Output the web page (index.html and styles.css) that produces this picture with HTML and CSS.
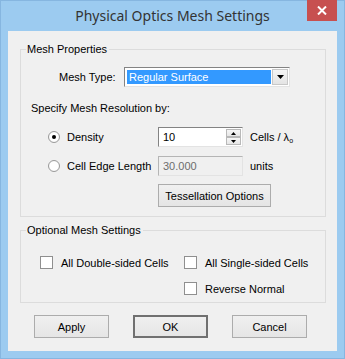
FILE: index.html
```html
<!DOCTYPE html>
<html lang="en">
<head>
  <meta charset="UTF-8">
  <title>Physical Optics Mesh Settings</title>
  <link rel="stylesheet" href="styles.css">
</head>
<body>
  <div class="window">
    <!-- Title bar -->
    <div class="titlebar">
      <span></span>
      <div class="title">Physical Optics Mesh Settings</div>
      <div class="close">
        <svg width="10" height="9" viewBox="0 0 10 9"><path d="M1 0.5 L9 8.5 M9 0.5 L1 8.5" stroke="#fff" stroke-width="2"/></svg>
      </div>
    </div>

    <div class="client">
      <!-- Mesh Properties -->
      <fieldset class="group group-mesh">
        <legend>Mesh Properties</legend>
        <div class="type-row">
          <span class="type-label">Mesh Type:</span>
          <div class="combo">
            <span class="combo-value">Regular Surface</span>
            <span class="combo-arrow">
              <svg width="7" height="4" viewBox="0 0 7 4"><path d="M0 0 H7 L3.5 4 Z" fill="#000"/></svg>
            </span>
          </div>
        </div>
        <div class="hint">Specify Mesh Resolution by:</div>

        <div class="option-row first">
          <span class="radio checked"></span>
          <span class="option-label">Density</span>
          <div class="field">
            <span class="field-value">10</span>
            <span class="spin">
              <span class="spin-btn"><svg width="5" height="3" viewBox="0 0 5 3"><path d="M2.5 0 L5 3 H0 Z" fill="#000"/></svg></span>
              <span class="spin-btn"><svg width="5" height="3" viewBox="0 0 5 3"><path d="M0 0 H5 L2.5 3 Z" fill="#000"/></svg></span>
            </span>
          </div>
          <span class="unit">Cells / λ<sub>o</sub></span>
        </div>

        <div class="option-row second">
          <span class="radio"></span>
          <span class="option-label">Cell Edge Length</span>
          <div class="field disabled">
            <span class="field-value">30.000</span>
          </div>
          <span class="unit">units</span>
        </div>

        <div class="tess-row">
          <button class="btn tess">Tessellation Options</button>
        </div>
      </fieldset>

      <!-- Optional Mesh Settings -->
      <fieldset class="group group-optional">
        <legend>Optional Mesh Settings</legend>
        <div class="checks">
          <label class="check"><span class="box"></span>All Double-sided Cells</label>
          <label class="check"><span class="box"></span>All Single-sided Cells</label>
          <span></span>
          <label class="check"><span class="box"></span>Reverse Normal</label>
        </div>
      </fieldset>

      <div class="actions">
        <button class="btn">Apply</button>
        <button class="btn default">OK</button>
        <button class="btn">Cancel</button>
      </div>
    </div>
  </div>
</body>
</html>
```

FILE: styles.css
```css
/* Window frame */
body {
  margin: 0;
  background: #9ccbf0;
}

.window {
  width: 345px;
  height: 359px;
  box-sizing: border-box;
  border: 1px solid #86b6e0;
  background: #9ccbf0;
  display: flex;
  flex-direction: column;
  font-family: "Liberation Sans", Arial, sans-serif;
  font-size: 11px;
  color: #000;
}

.titlebar {
  height: 30px;
  display: grid;
  grid-template-columns: 1fr auto 1fr;
  align-items: start;
}

.title {
  font-family: "Noto Sans", sans-serif;
  font-size: 14px;
  line-height: 30px;
  color: #333;
}

.close {
  justify-self: end;
  margin-top: -1px;
  margin-right: 7px;
  width: 30px;
  height: 21px;
  background: #c75050;
  display: flex;
  align-items: center;
  justify-content: center;
}

.client {
  margin: 0 7px 7px;
  height: 320px;
  background: #f0f0f0;
  padding: 0 11px 0 12px;
}

/* Group boxes */
.group {
  margin: 0;
  padding: 0;
  width: 306px;
  box-sizing: border-box;
  border: 1px solid #dcdcdc;
  min-inline-size: 0;
}

.group legend {
  margin-left: 5px;
  padding: 0 2px 0 1px;
  line-height: 14px;
}

.group-mesh {
  margin-top: 11px;
  padding-bottom: 9px;
}

.group-optional {
  margin-top: 6px;
  padding-bottom: 7px;
}

/* Mesh type */
.type-row {
  display: flex;
  align-items: center;
  margin-top: 11px;
  padding-left: 38px;
}

.type-label {
  width: 65px;
}

.combo {
  width: 166px;
  height: 20px;
  box-sizing: border-box;
  border: 1px solid;
  border-color: #838383 #e3e3e3 #e3e3e3 #838383;
  background: #fff;
  padding: 1px;
  display: flex;
}

.combo-value {
  flex: 1;
  background: #3399ff;
  color: #fff;
  padding-left: 2px;
  line-height: 14px;
  margin: 1px;
}

.combo-arrow {
  width: 16px;
  box-sizing: border-box;
  border: 1px solid #c8c8c8;
  background: linear-gradient(#f5f5f5, #e4e4e4);
  display: flex;
  align-items: center;
  justify-content: center;
}

.hint {
  margin-top: 14px;
  padding-left: 10px;
  line-height: 14px;
}

/* Radio option rows */
.option-row {
  display: grid;
  grid-template-columns: 12px 98px 85px auto;
  align-items: center;
  padding-left: 27px;
  height: 20px;
}

.option-row.first {
  margin-top: 12px;
}

.option-row.second {
  margin-top: 9px;
}

.option-label {
  padding-left: 7px;
}

.radio {
  width: 12px;
  height: 12px;
  box-sizing: border-box;
  border-radius: 50%;
  border: 1px solid #9a9a9a;
  background: radial-gradient(circle, #fff 55%, #e6e6e6);
  display: flex;
  align-items: center;
  justify-content: center;
}

.radio.checked::after {
  content: "";
  width: 4px;
  height: 4px;
  border-radius: 50%;
  background: #000;
}

.field {
  height: 20px;
  box-sizing: border-box;
  border: 1px solid;
  border-color: #838383 #e3e3e3 #e3e3e3 #838383;
  background: #fff;
  display: flex;
}

.field-value {
  flex: 1;
  padding-left: 4px;
  line-height: 18px;
}

.field.disabled {
  background: #f0f0f0;
  border-color: #b5b5b5 #e3e3e3 #e3e3e3 #b5b5b5;
  color: #6d6d6d;
}

.spin {
  width: 15px;
  display: flex;
  flex-direction: column;
  padding: 1px 1px 1px 0;
}

.spin-btn {
  flex: 1;
  border: 1px solid #b8b8b8;
  background: linear-gradient(#f6f6f6, #e6e6e6);
  display: flex;
  align-items: center;
  justify-content: center;
}

.unit {
  padding-left: 7px;
}

.unit sub {
  font-size: 7px;
  vertical-align: -2px;
}

.tess-row {
  margin-top: 8px;
  padding-left: 137px;
}

/* Buttons */
.btn {
  font-family: inherit;
  font-size: 11px;
  color: #000;
  height: 23px;
  width: 75px;
  box-sizing: border-box;
  border: 1px solid #acacac;
  background: linear-gradient(#f0f0f0, #e5e5e5);
  padding: 0;
}

.btn.tess {
  width: 113px;
}

.btn.default {
  border: 1px solid #707070;
  box-shadow: inset 0 0 0 1px #707070;
}

/* Check boxes */
.checks {
  display: grid;
  grid-template-columns: 144px auto;
  row-gap: 13px;
  margin-top: 19px;
  padding-left: 19px;
}

.check {
  display: flex;
  align-items: center;
  height: 13px;
}

.box {
  width: 13px;
  height: 13px;
  box-sizing: border-box;
  border: 1px solid #8f8f8f;
  background: #fff;
  margin-right: 8px;
}

.actions {
  display: flex;
  gap: 24px;
  margin-top: 12px;
  padding-left: 14px;
}
```
